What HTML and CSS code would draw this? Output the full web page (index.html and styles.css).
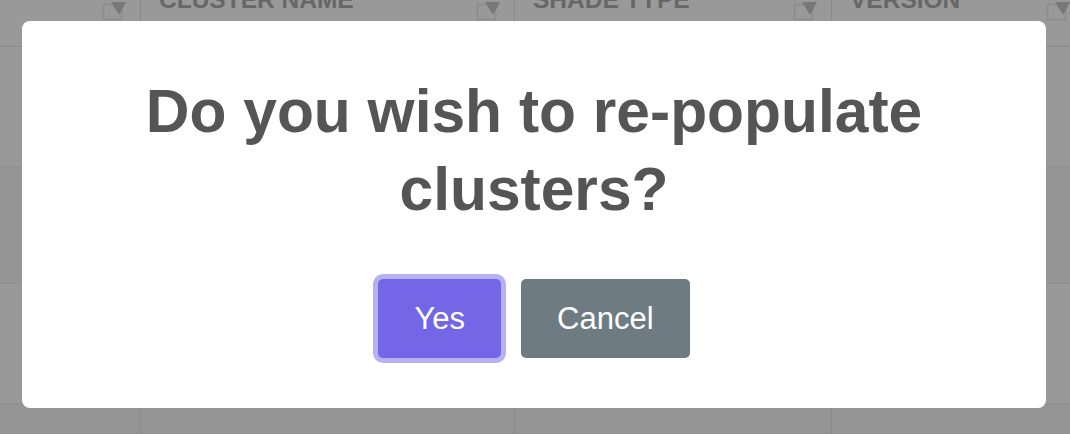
FILE: index.html
```html
<!DOCTYPE html>
<html lang="en">
<head>
<meta charset="utf-8">
<title>Re-populate clusters</title>
<link rel="stylesheet" href="styles.css">
</head>
<body>
<div class="table">
  <div class="hcell"><span class="htext"></span><svg class="filter" viewBox="0 0 24 20" width="24" height="20"><rect x="1.5" y="3.5" width="18" height="15" fill="none" stroke="#8c8c8c" stroke-width="1.5"/><polygon points="9,1 24,1 17,14" fill="#787878"/></svg></div>
  <div class="hcell"><span class="htext">CLUSTER NAME</span><svg class="filter" viewBox="0 0 24 20" width="24" height="20"><rect x="1.5" y="3.5" width="18" height="15" fill="none" stroke="#8c8c8c" stroke-width="1.5"/><polygon points="9,1 24,1 17,14" fill="#787878"/></svg></div>
  <div class="hcell"><span class="htext">SHADE TYPE</span><svg class="filter" viewBox="0 0 24 20" width="24" height="20"><rect x="1.5" y="3.5" width="18" height="15" fill="none" stroke="#8c8c8c" stroke-width="1.5"/><polygon points="9,1 24,1 17,14" fill="#787878"/></svg></div>
  <div class="hcell last"><span class="htext">VERSION</span><svg class="filter" viewBox="0 0 24 20" width="24" height="20"><rect x="1.5" y="3.5" width="18" height="15" fill="none" stroke="#8c8c8c" stroke-width="1.5"/><polygon points="9,1 24,1 17,14" fill="#787878"/></svg></div>

  <div class="cell r1"></div><div class="cell r1"></div><div class="cell r1"></div><div class="cell r1 last"></div>
  <div class="cell r2"></div><div class="cell r2"></div><div class="cell r2"></div><div class="cell r2 last"></div>
  <div class="cell r1"></div><div class="cell r1"></div><div class="cell r1"></div><div class="cell r1 last"></div>
  <div class="cell r2"></div><div class="cell r2"></div><div class="cell r2"></div><div class="cell r2 last"></div>
</div>

<div class="modal">
  <h2 class="title">Do you wish to re-populate clusters?</h2>
  <div class="actions">
    <button class="btn btn-primary">Yes</button>
    <button class="btn btn-secondary">Cancel</button>
  </div>
</div>
</body>
</html>
```

FILE: styles.css
```css
html, body {
  margin: 0;
  padding: 0;
}

body {
  width: 1070px;
  height: 434px;
  overflow: hidden;
  background: #999999;
  font-family: "Liberation Sans", Arial, sans-serif;
}

.table {
  display: grid;
  grid-template-columns: 141px 374px 317px 1fr;
  grid-template-rows: 69px 120px 117px 120px 30px;
  height: 456px;
  overflow: hidden;
  margin-top: -22px;
}

.hcell {
  display: flex;
  justify-content: space-between;
  align-items: flex-start;
  padding: 8px 14px 0 18px;
  border-right: 1px solid #8a8a8a;
  border-bottom: 1px solid #8c8c8c;
  background: #999999;
}

.hcell.last {
  border-right: none;
  padding-right: 0;
}

.htext {
  font-size: 24.5px;
  line-height: 28px;
  font-weight: 700;
  color: #676767;
  white-space: nowrap;
}

.filter {
  margin-top: 15px;
  flex: none;
}

.cell {
  border-right: 1px solid #8a8a8a;
  border-bottom: 1px solid #8f8f8f;
}

.cell.last {
  border-right: none;
}

.r1 {
  background: #999999;
}

.r2 {
  background: #959595;
}

.modal {
  position: fixed;
  left: 22px;
  top: 21px;
  width: 1024px;
  height: 387px;
  box-sizing: border-box;
  background: #ffffff;
  border-radius: 8px;
  padding: 51px 50px 50px;
  display: flex;
  flex-direction: column;
  align-items: center;
}

.title {
  margin: 0;
  font-size: 60.5px;
  line-height: 78px;
  font-weight: 700;
  color: #555555;
  text-align: center;
}

.actions {
  display: flex;
  gap: 20px;
  margin-top: 51px;
}

.btn {
  height: 79px;
  padding: 0 36px;
  border: none;
  border-radius: 5px;
  font-family: "Liberation Sans", Arial, sans-serif;
  font-size: 31px;
  color: #ffffff;
}

.btn-primary {
  background: #7367e8;
  box-shadow: 0 0 0 5px #b6b1f2;
}

.btn-secondary {
  background: #6e7b83;
}
```
